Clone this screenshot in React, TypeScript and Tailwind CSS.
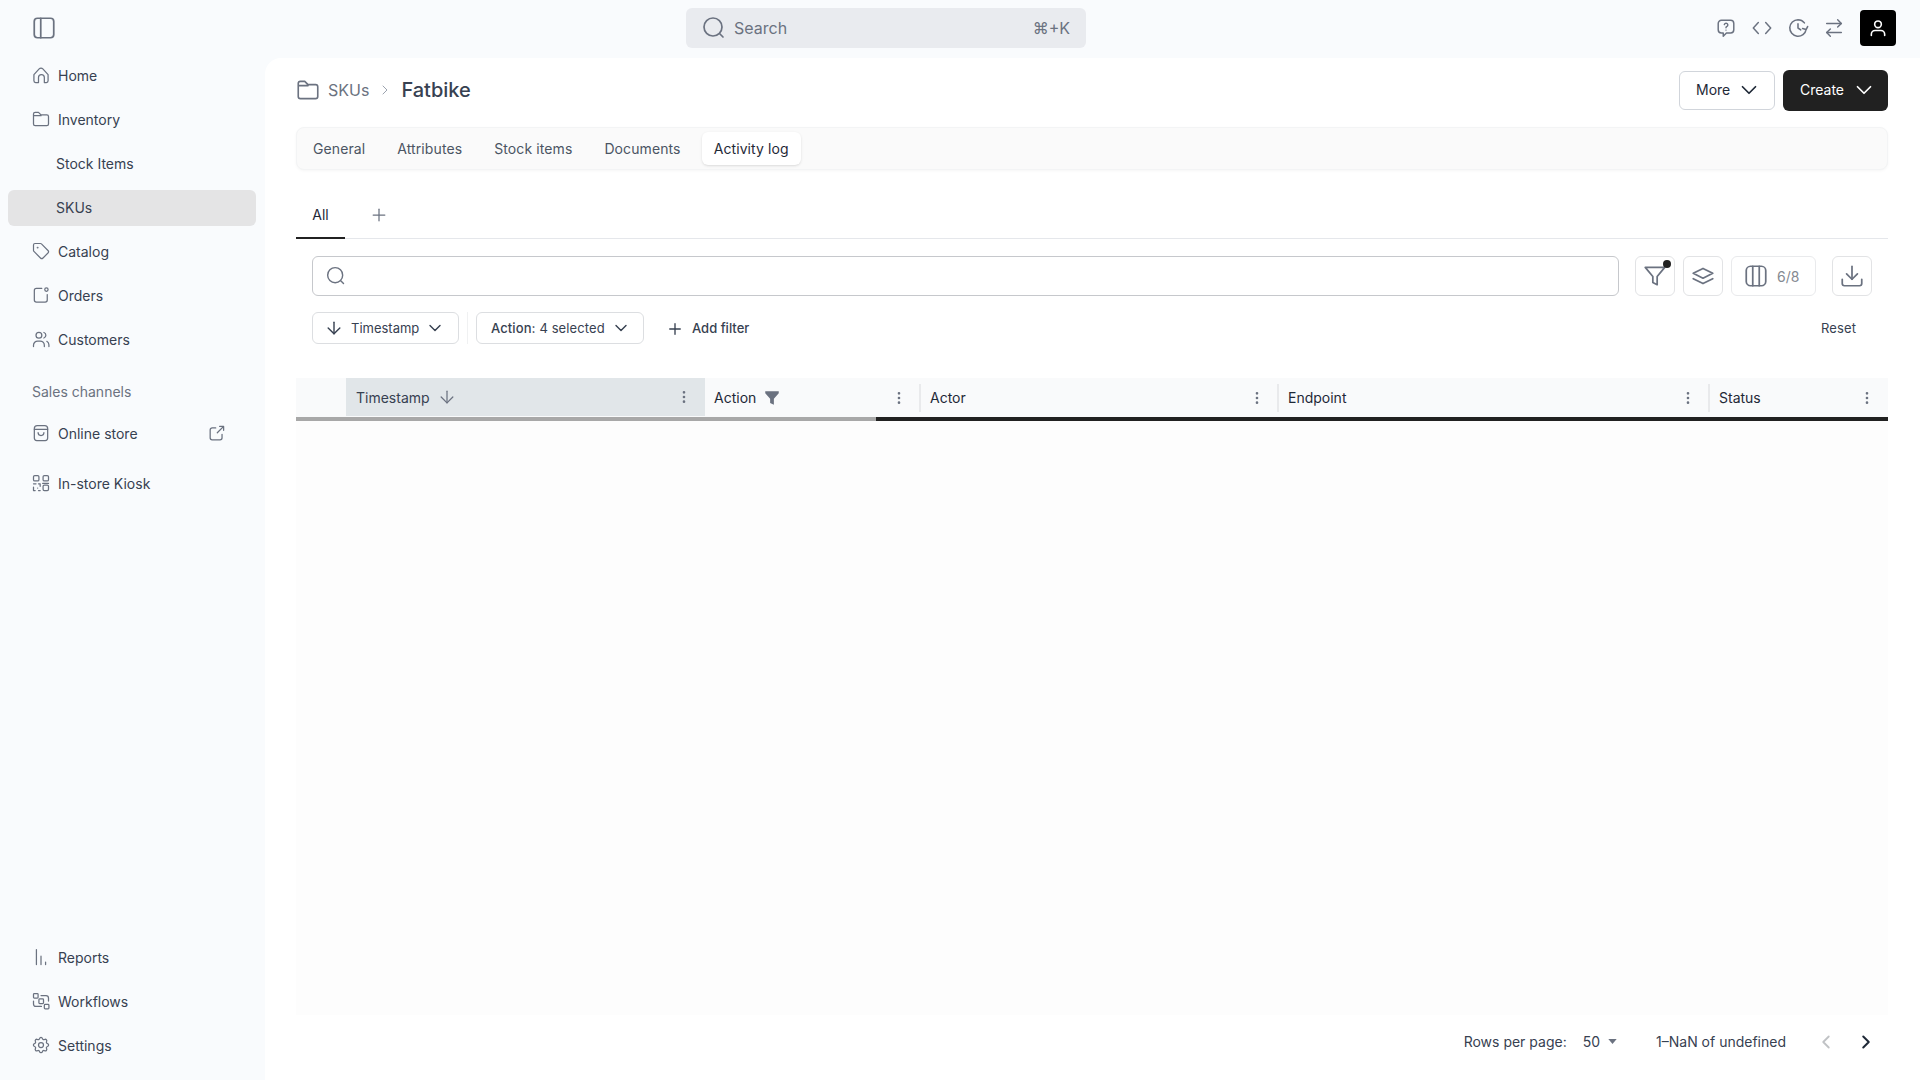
import React from "react";
import {
  ArrowDown,
  ArrowRightLeft,
  ChevronDown,
  ChevronLeft,
  ChevronRight,
  Download,
  EllipsisVertical,
  Plus,
  Tag,
} from "lucide-react";

type P = { className?: string };
const S = ({ className, children, sw = 1.5 }: P & { children: React.ReactNode; sw?: number }) => (
  <svg viewBox="0 0 24 24" fill="none" stroke="currentColor" strokeWidth={sw} strokeLinecap="round" strokeLinejoin="round" className={className}>
    {children}
  </svg>
);

const SearchI = ({ className }: P) => (
  <S className={className} sw={1.7}><circle cx="11" cy="11" r="9" /><path d="M18 18l3 3" /></S>
);
const HomeI = ({ className }: P) => (
  <S className={className}><path d="M3.500 11.500 9.800 4.600a3 3 0 0 1 4.400 0l6.300 6.900V19a2 2 0 0 1-2 2h-2.500v-6a3.500 3.500 0 0 0-7 0v6H5.500a2 2 0 0 1-2-2z" /></S>
);
const FolderI = ({ className }: P) => (
  <S className={className}><path d="M3 7V6a2 2 0 0 1 2-2h4l3 3h7a2 2 0 0 1 2 2v9a2 2 0 0 1-2 2H5a2 2 0 0 1-2-2zM3 8h9" /></S>
);
const TagI = ({ className }: P) => <Tag className={`${className} scale-90`} strokeWidth={1.6} />;
const OrdersI = ({ className }: P) => (
  <S className={className}><path d="M13 4H6.500A2.500 2.500 0 0 0 4 6.500V18a2.500 2.500 0 0 0 2.500 2.500H17a2.500 2.500 0 0 0 2.500-2.500v-6.500" /><circle cx="18.500" cy="5.500" r="2" /></S>
);
const UsersI = ({ className }: P) => (
  <S className={className}><circle cx="9.500" cy="7.500" r="3.500" /><path d="M3 21v-1.500a5 5 0 0 1 5-5h3a5 5 0 0 1 5 5V21M15.500 4.200a3.500 3.500 0 0 1 0 6.600M19 14.800a5 5 0 0 1 2.500 4.200V21" /></S>
);
const BagI = ({ className }: P) => (
  <S className={className}><path d="M4 6.500A3.500 3.500 0 0 1 7.500 3h9A3.500 3.500 0 0 1 20 6.500V18a3 3 0 0 1-3 3H7a3 3 0 0 1-3-3z" /><path d="M4 7.500h16M8.500 11.500a3.500 3.500 0 0 0 7 0" /></S>
);
const QrI = ({ className }: P) => (
  <S className={className}>
    <rect x="3" y="3" width="6.500" height="6.500" rx="1.500" />
    <rect x="14.500" y="3" width="6.500" height="6.500" rx="1.500" />
    <rect x="14.500" y="14.500" width="6.500" height="6.500" rx="1.500" />
    <path d="M3 13h3M9 13h2v3M14 12.500h7M3 17v4h2M9 21h2M8 18v0" />
  </S>
);
const BarsI = ({ className }: P) => (
  <S className={className}><path d="M6.500 3v18M12 11v10M17.500 18v3" /></S>
);
const FlowI = ({ className }: P) => (
  <S className={className}>
    <rect x="3" y="3" width="5.500" height="5.500" rx="1" />
    <rect x="9.500" y="9.500" width="5.500" height="5.500" rx="1" />
    <rect x="16" y="16" width="5.500" height="5.500" rx="1" />
    <path d="M12 5.500h6a3 3 0 0 1 3 3V12M3 12v3.500a3 3 0 0 0 3 3h6.500" />
  </S>
);
const GearI = ({ className }: P) => (
  <S className={className}>
    <path d="M10.300 4.300a1.750 1.750 0 0 1 3.400 0 1.750 1.750 0 0 0 2.600 1.100 1.750 1.750 0 0 1 2.400 2.400 1.750 1.750 0 0 0 1.100 2.600 1.750 1.750 0 0 1 0 3.400 1.750 1.750 0 0 0-1.100 2.600 1.750 1.750 0 0 1-2.400 2.400 1.750 1.750 0 0 0-2.600 1.100 1.750 1.750 0 0 1-3.400 0 1.750 1.750 0 0 0-2.600-1.100 1.750 1.750 0 0 1-2.400-2.400 1.750 1.750 0 0 0-1.100-2.600 1.750 1.750 0 0 1 0-3.400 1.750 1.750 0 0 0 1.100-2.600 1.750 1.750 0 0 1 2.400-2.400 1.750 1.750 0 0 0 2.600-1.100z" />
    <circle cx="12" cy="12" r="3" />
  </S>
);
const ExtI = ({ className }: P) => (
  <S className={className} sw={1.6}><path d="M11 5H6.500A2.500 2.500 0 0 0 4 7.500v10A2.500 2.500 0 0 0 6.500 20h10a2.500 2.500 0 0 0 2.500-2.500V13M13 11l8-8M16 3h5v5" /></S>
);
const PanelI = ({ className }: P) => (
  <S className={className} sw={1.6}><rect x="3" y="3" width="18" height="18" rx="3" /><path d="M9 3v18" /></S>
);
const ChatI = ({ className }: P) => (
  <S className={className} sw={1.6}><path d="M7 3.500h10A3.500 3.500 0 0 1 20.500 7v7a3.500 3.500 0 0 1-3.500 3.500h-4.500L9 21v-3.500H7A3.500 3.500 0 0 1 3.500 14V7A3.500 3.500 0 0 1 7 3.500z" /><path d="M10.200 8.300a1.900 1.900 0 1 1 2.800 2c-.6.300-1 .8-1 1.400M12 14.300v.01" /></S>
);
const CodeI = ({ className }: P) => (
  <S className={className} sw={1.6}><path d="M8 6 2.500 12 8 18M16 6l5.500 6-5.500 6" /></S>
);
const ClockI = ({ className }: P) => (
  <S className={className} sw={1.7}><path d="M12 3a9 9 0 1 0 8.900 10.500M12 3a9 9 0 0 1 7 3.400M12 7.500V12l3 2M17 12.500l3.800 1.200 1.700-3.300" /></S>
);
const UserI = ({ className }: P) => (
  <S className={className} sw={1.9}><circle cx="12" cy="7.500" r="4" /><path d="M4 21v-1.500a4.500 4.500 0 0 1 4.500-4.500h7a4.500 4.500 0 0 1 4.500 4.500V21" /></S>
);
const FunnelI = ({ className }: P) => (
  <S className={className} sw={1.6}><path d="M3 4h18l-7 8.500V20l-4-2v-5.500z" /></S>
);
const StackI = ({ className }: P) => (
  <S className={className} sw={1.6}><path d="M12 5 3 9.500l9 4.500 9-4.500zM3 14.500l9 4.500 9-4.500" /></S>
);
const ColumnsI = ({ className }: P) => (
  <S className={className} sw={1.6}><rect x="3" y="3" width="18" height="18" rx="4" /><path d="M9 3v18M15 3v18" /></S>
);
const Solid = ({ className }: P) => (
  <svg viewBox="0 0 24 24" fill="currentColor" className={className}><path d="M3 3h18v2.500L14.500 13v8l-5-2.500V13L3 5.500z" /></svg>
);

const NavRow = ({ icon: I, label, active, sub, right }: { icon?: React.ComponentType<P>; label: string; active?: boolean; sub?: boolean; right?: React.ReactNode }) => (
  <div className={`flex h-9 items-center rounded-md pb-[2px] text-[14px] text-[#374151] ${active ? "bg-[#e4e4e5]" : ""} ${sub ? "pl-[48px]" : "pl-[23px]"} ${right ? "justify-between pr-[30px]" : ""}`}>
    <span className="flex items-center gap-[7px]">
      {I && <I className="size-5 text-[#6b7280]" />}
      {label}
    </span>
    {right}
  </div>
);

const TAB_LABELS = ["General", "Attributes", "Stock items", "Documents"];

const Col = ({ label, w, extra, first, dotsClass }: { label: string; w: string; extra?: React.ReactNode; first?: boolean; dotsClass: string }) => (
  <div className={`flex h-full items-center ${w}`}>
    {!first && <span className="h-7 w-0.5 shrink-0 bg-[#e9eaec]" />}
    <span className="ml-[9px] flex items-center gap-[7px] text-[14px] text-[#1f2937]">
      {label}
      {extra}
    </span>
    <EllipsisVertical className={`ml-auto size-4 text-[#6b7280] ${dotsClass}`} strokeWidth={2} />
  </div>
);

export default function App() {
  return (
    <div className="flex h-[1080px] w-full flex-col overflow-hidden bg-[#f9fbfd] font-['Inter',sans-serif]">
      <header className="flex h-[58px] shrink-0 items-center pb-[2px] pl-[31px] pr-6">
        <PanelI className="size-[26px] text-[#6b7280]" />
        <div className="ml-[629px] flex h-10 w-[400px] items-center rounded-md bg-[#e9ebef] pl-4 pr-4 text-[#6b7280]">
          <SearchI className="size-6" />
          <span className="ml-2 text-[16px]">Search</span>
          <span className="ml-auto text-[16px]">⌘+K</span>
        </div>
        <div className="ml-auto flex items-center text-[#6b7280]">
          <ChatI className="size-[22px]" />
          <CodeI className="ml-[14px] size-[22px]" />
          <ClockI className="ml-[14px] size-[22px]" />
          <ArrowRightLeft className="ml-[14px] size-[22px]" strokeWidth={1.6} />
          <div className="ml-[15px] flex size-9 items-center justify-center rounded bg-black">
            <UserI className="size-[20px] text-white" />
          </div>
        </div>
      </header>

      <div className="flex min-h-0 flex-1">
        <aside className="flex w-[265px] shrink-0 flex-col justify-between pb-4 pl-2 pr-[9px]">
          <div className="flex flex-col">
            <div className="flex flex-col gap-2">
              <NavRow icon={HomeI} label="Home" />
              <NavRow icon={FolderI} label="Inventory" />
              <NavRow label="Stock Items" sub />
              <NavRow label="SKUs" sub active />
              <NavRow icon={TagI} label="Catalog" />
              <NavRow icon={OrdersI} label="Orders" />
              <NavRow icon={UsersI} label="Customers" />
            </div>
            <div className="mt-6 h-5 pl-6 text-[14px] leading-5 text-[#6b7280]">Sales channels</div>
            <div className="mt-[14px] flex flex-col gap-[14px]">
              <NavRow icon={BagI} label="Online store" right={<ExtI className="size-[19px] text-[#6b7280]" />} />
              <NavRow icon={QrI} label="In-store Kiosk" />
            </div>
          </div>
          <div className="flex flex-col gap-2">
            <NavRow icon={BarsI} label="Reports" />
            <NavRow icon={FlowI} label="Workflows" />
            <NavRow icon={GearI} label="Settings" />
          </div>
        </aside>

        <main className="flex min-w-0 flex-1 flex-col rounded-tl-2xl bg-white pl-[31px] pr-8 pt-3">
          <div className="flex h-[41px] shrink-0 items-center">
            <div className="-ml-px flex items-center pb-[2px]">
              <FolderI className="size-[26px] text-[#6b7280]" />
              <span className="ml-[7px] text-[16px] text-[#6b7280]">SKUs</span>
              <ChevronRight className="ml-2 size-4 text-[#9ca3af]" strokeWidth={1.5} />
              <span className="ml-2 text-[20px] font-medium text-[#374151]">Fatbike</span>
            </div>
            <button className="ml-auto flex h-[39px] w-24 items-center gap-[6px] rounded-md border border-[#d1d5db] bg-white pb-[2px] pl-4 text-[14px] text-[#1f2937]">
              More <ChevronDown className="size-[26px]" strokeWidth={1.6} />
            </button>
            <button className="ml-2 flex h-[41px] w-[105px] items-center gap-[7px] rounded-md bg-[#212121] pb-[2px] pl-[17px] text-[14px] text-white">
              Create <ChevronDown className="size-[26px]" strokeWidth={1.6} />
            </button>
          </div>

          <div className="mt-4 flex h-[43px] shrink-0 items-center rounded-lg border border-[#f3f4f5] bg-[#fafafa] pl-[6px] shadow-[0_1px_3px_rgba(0,0,0,0.04)]">
            {TAB_LABELS.map((t) => (
              <span key={t} className="px-[10px] text-[14px] tracking-[0.1px] text-[#4b5563] [&:not(:first-child)]:ml-3">{t}</span>
            ))}
            <span className="ml-[11px] flex h-[33px] items-center rounded-md bg-white px-[12px] text-[14px] tracking-[0.1px] text-[#1f2937] shadow-sm">Activity log</span>
          </div>

          <div className="mt-[21px] flex h-[48px] shrink-0 border-b border-[#e5e7eb]">
            <div className="-mb-px flex w-[49px] items-center justify-center border-b-2 border-[#212121] text-[14px] text-[#1f2937]">All</div>
            <div className="ml-[24px] flex items-center"><Plus className="size-[20px] text-[#6b7280]" strokeWidth={1.5} /></div>
          </div>

          <div className="mt-[17px] flex h-10 shrink-0 items-center px-4">
            <div className="flex h-10 flex-1 items-center rounded-md border border-[#c6c8cc] pl-[13px]">
              <SearchI className="size-5 text-[#6b7280]" />
            </div>
            <button className="relative ml-4 flex size-10 items-center justify-center rounded-md border border-[#e2e3e5]">
              <FunnelI className="size-[26px] text-[#6b7280]" />
              <span className="absolute right-[3px] top-[3px] size-2 rounded-full bg-[#212121]" />
            </button>
            <button className="ml-2 flex size-10 items-center justify-center rounded-md border border-[#e2e3e5]">
              <StackI className="size-[26px] text-[#6b7280]" />
            </button>
            <button className="ml-2 flex h-10 w-[85px] items-center gap-2 rounded-md border border-[#e9eaec] pl-[11px] text-[14px] text-[#858a92]">
              <ColumnsI className="size-[26px] text-[#6b7280]" />
              6/8
            </button>
            <button className="ml-4 flex size-10 items-center justify-center rounded-md border border-[#e2e3e5]">
              <Download className="size-[26px] text-[#6b7280]" strokeWidth={1.6} />
            </button>
          </div>

          <div className="mt-4 flex h-8 shrink-0 items-center pl-4 text-[13px] text-[#374151]">
            <button className="flex h-8 w-[147px] items-center rounded-md border border-[#dcdee1] pl-[11px]">
              <ArrowDown className="size-5" strokeWidth={1.7} />
              <span className="ml-[7px] pt-px">Timestamp</span>
              <ChevronDown className="ml-[6px] size-5" strokeWidth={1.7} />
            </button>
            <span className="ml-2 h-8 w-px bg-[#f0f1f2]" />
            <button className="ml-2 flex h-8 w-[168px] items-center rounded-md border border-[#dcdee1] pl-[14px]">
              <span className="pt-px tracking-[0.1px]"><span className="font-medium">Action:</span> 4 selected</span>
              <ChevronDown className="ml-[6px] size-5" strokeWidth={1.7} />
            </button>
            <span className="ml-[22px] flex items-center gap-2 pt-[2px] font-medium text-[#374151]">
              <Plus className="size-[18px]" strokeWidth={1.8} />
              Add filter
            </span>
            <span className="ml-auto pr-[32px] pt-[2px] tracking-[0.1px] text-[#374151]">Reset</span>
          </div>

          <div className="mt-[34px] flex min-h-0 flex-1 flex-col">
            <div className="flex h-[39px] shrink-0 bg-[#f9fafb]">
              <div className="w-[50px]" />
              <div className="flex h-[38px] w-[359px] items-center bg-[#e1e6e9] pl-[10px]">
                <span className="text-[14px] text-[#374151]">Timestamp</span>
                <ArrowDown className="ml-[7px] size-5 text-[#6b7280]" strokeWidth={1.5} />
                <EllipsisVertical className="ml-auto mr-[13px] size-4 text-[#6b7280]" strokeWidth={2} />
              </div>
              <Col label="Action" w="w-[214px]" first dotsClass="mr-3" extra={<Solid className="size-[18px] text-[#6b7280]" />} />
              <Col label="Actor" w="w-[358px]" dotsClass="mr-3" />
              <Col label="Endpoint" w="w-[431px]" dotsClass="mr-3" />
              <Col label="Status" w="flex-1" dotsClass="mr-[13px]" />
            </div>
            <div className="flex h-1 shrink-0">
              <div className="w-[580px] bg-[#a8a8a8]" />
              <div className="flex-1 bg-[#212121]" />
            </div>
            <div className="min-h-0 flex-1 bg-[#fdfdfd]" />
            <div className="mb-[11px] flex h-[54px] shrink-0 items-center justify-end pb-px text-[14px] text-[#374151]">
              <span>Rows per page:</span>
              <span className="ml-4">50</span>
              <svg viewBox="0 0 10 6" className="ml-[8px] h-[5px] w-[9px] text-[#6b7280]" fill="currentColor"><path d="M0 0h10L5 6z" /></svg>
              <span className="ml-[39px]">1–NaN of undefined</span>
              <ChevronLeft className="ml-[29px] size-[22px] text-[#c0c2c5]" strokeWidth={2} />
              <ChevronRight className="ml-[18px] mr-[11px] size-[22px] text-[#1f2937]" strokeWidth={2.2} />
            </div>
          </div>
        </main>
      </div>
    </div>
  );
}
